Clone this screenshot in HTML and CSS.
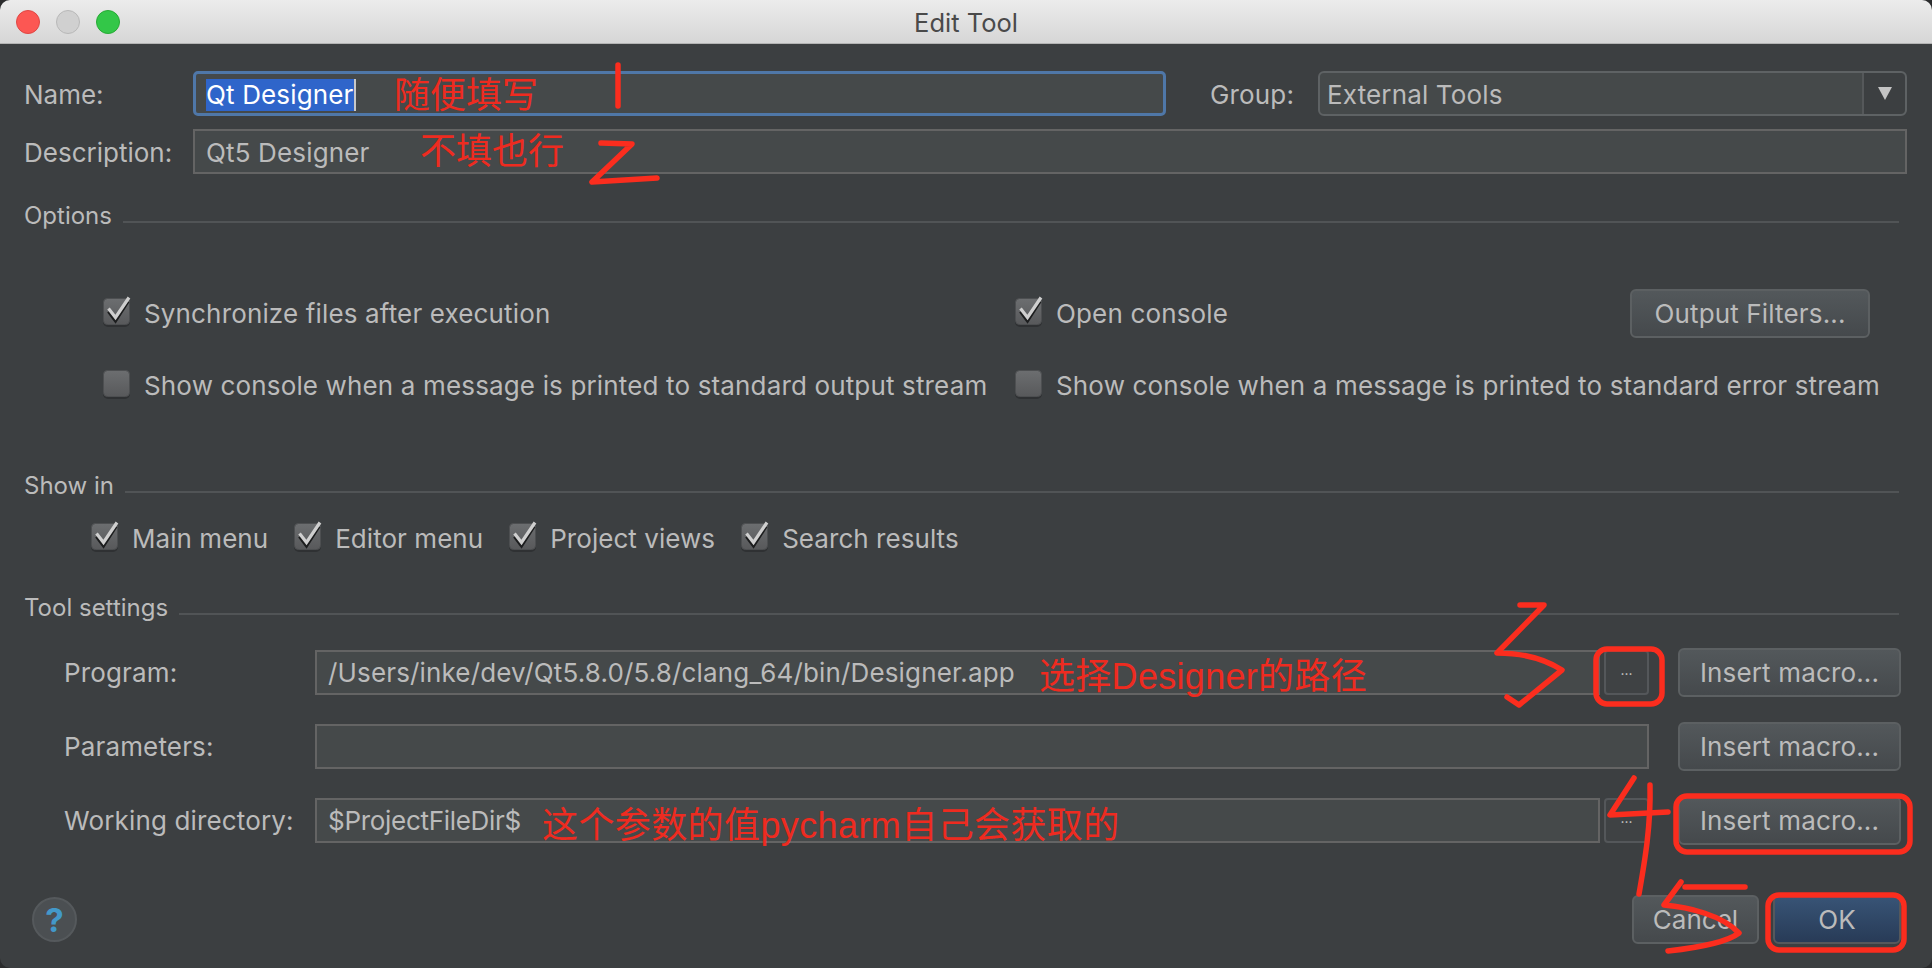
FILE: index.html
```html
<!DOCTYPE html>
<html lang="en">
<head>
<meta charset="utf-8">
<title>Edit Tool</title>
<link rel="stylesheet" href="styles.css">
</head>
<body>
<svg class="defs" width="0" height="0" aria-hidden="true">
  <defs>
    <linearGradient id="boxfill" x1="0" y1="0" x2="0" y2="1">
      <stop offset="0" stop-color="#6c6e70"/>
      <stop offset="1" stop-color="#58595b"/>
    </linearGradient>
    <symbol id="cb-off" viewBox="0 0 30 32">
      <rect x="1" y="5" width="27" height="26" rx="5" fill="#2f3133"/>
      <rect x="1.5" y="2.5" width="26" height="26" rx="4" fill="url(#boxfill)" stroke="#4d4f51"/>
    </symbol>
    <symbol id="cb-on" viewBox="0 0 30 32">
      <rect x="1" y="5" width="27" height="26" rx="5" fill="#2f3133"/>
      <rect x="1.5" y="2.5" width="26" height="26" rx="4" fill="url(#boxfill)" stroke="#4d4f51"/>
      <path d="M6.5 15.5 L13.5 25 L26 5.5" fill="none" stroke="#1c1d1e" stroke-width="3.2"/>
      <path d="M6.5 12.5 L13.5 21.5 L27 1.5" fill="none" stroke="#cfcfcf" stroke-width="3.2"/>
    </symbol>
  </defs>
</svg>
<main class="window">
  <header class="titlebar">
    <div class="lights">
      <span class="light light-red"></span>
      <span class="light light-gray"></span>
      <span class="light light-green"></span>
    </div>
    <div class="title">Edit Tool</div>
    <div></div>
  </header>

  <div class="content">
    <div class="row-name">
      <label class="label label-top">Name:</label>
      <div class="field field-focus"><span class="selected">Qt Designer</span></div>
      <label class="label label-group">Group:</label>
      <div class="combo">
        <span class="combo-value">External Tools</span>
        <span class="combo-arrow"><span class="triangle"></span></span>
      </div>
    </div>
    <div class="row-desc">
      <label class="label label-top">Description:</label>
      <div class="field field-grow field-desc">Qt5 Designer</div>
    </div>

    <section class="group-options">
      <div class="heading"><span>Options</span><i class="rule"></i></div>
      <div class="opt-row opt-row-first">
        <div class="check opt-col"><svg class="box"><use href="#cb-on"/></svg><span>Synchronize files after execution</span></div>
        <div class="check"><svg class="box"><use href="#cb-on"/></svg><span>Open console</span></div>
        <button class="btn btn-filters">Output Filters...</button>
      </div>
      <div class="opt-row opt-row-second">
        <div class="check opt-col"><svg class="box"><use href="#cb-off"/></svg><span>Show console when a message is printed to standard output stream</span></div>
        <div class="check"><svg class="box"><use href="#cb-off"/></svg><span>Show console when a message is printed to standard error stream</span></div>
      </div>
    </section>

    <section class="group-show">
      <div class="heading"><span>Show in</span><i class="rule"></i></div>
      <div class="show-row">
        <div class="check"><svg class="box"><use href="#cb-on"/></svg><span>Main menu</span></div>
        <div class="check"><svg class="box"><use href="#cb-on"/></svg><span>Editor menu</span></div>
        <div class="check"><svg class="box"><use href="#cb-on"/></svg><span>Project views</span></div>
        <div class="check"><svg class="box"><use href="#cb-on"/></svg><span>Search results</span></div>
      </div>
    </section>

    <section class="group-tool">
      <div class="heading"><span>Tool settings</span><i class="rule"></i></div>
      <div class="tool-grid">
        <div class="tool-row">
          <label class="label label-tool">Program:</label>
          <div class="field field-grow">/Users/inke/dev/Qt5.8.0/5.8/clang_64/bin/Designer.app</div>
          <button class="browse">...</button>
          <button class="btn btn-macro">Insert macro...</button>
        </div>
        <div class="tool-row">
          <label class="label label-tool">Parameters:</label>
          <div class="field field-grow"></div>
          <button class="btn btn-macro">Insert macro...</button>
        </div>
        <div class="tool-row">
          <label class="label label-tool">Working directory:</label>
          <div class="field field-grow field-tight">$ProjectFileDir$</div>
          <button class="browse">...</button>
          <button class="btn btn-macro">Insert macro...</button>
        </div>
      </div>
    </section>

    <footer class="footer">
      <div class="help">?</div>
      <div class="footer-actions">
        <button class="btn btn-cancel">Cancel</button>
        <button class="btn btn-ok">OK</button>
      </div>
    </footer>
  </div>

  <div class="notes">
    <span class="note note-a">随便填写</span>
    <span class="note note-b">不填也行</span>
    <span class="note note-c">选择Designer的路径</span>
    <span class="note note-d">这个参数的值pycharm自己会获取的</span>
    <svg class="scribble" viewBox="0 0 1932 968" width="1932" height="968" aria-hidden="true">
      <path d="M618 65 L618 106"/>
      <path d="M601 143 L632 144 L592 182 L657 178"/>
      <path d="M1520 605 L1544 605 L1497 653 C1519 653 1543 658 1562 670 L1519 705 L1507 697"/>
      <rect x="1596" y="649" width="66" height="55" rx="11"/>
      <path d="M1634 778 L1610 815 L1668 812"/>
      <path d="M1650 785 C1651 825 1645 860 1639 894"/>
      <rect x="1676" y="796" width="234" height="56" rx="11"/>
      <path d="M1681 882 L1664 905 C1688 907 1722 915 1739 933 C1726 943 1695 948 1668 951"/>
      <path d="M1685 887 L1745 887"/>
      <rect x="1768" y="895" width="136" height="55" rx="11"/>
    </svg>
  </div>
</main>
</body>
</html>
```

FILE: styles.css
```css
* { box-sizing: border-box; }

html, body {
  margin: 0;
  height: 100%;
  background: #2b2c2d;
  overflow: hidden;
}

.defs { position: absolute; }

.window {
  position: relative;
  width: 1932px;
  height: 968px;
  background: #3c3f41;
  border-radius: 10px;
  overflow: hidden;
  color: #bbbbbb;
  font-family: Inter, "Noto Sans", sans-serif;
  font-size: 26px;
  letter-spacing: 0.15px;
}

.titlebar {
  height: 44px;
  display: grid;
  grid-template-columns: 1fr auto 1fr;
  align-items: center;
  background: linear-gradient(#ececec, #d6d6d6);
  border-bottom: 1px solid #b4b4b4;
}

.title { color: #4a4a4a; font-size: 25.5px; padding-top: 2px; letter-spacing: 0; }

.lights { display: flex; gap: 16px; padding-left: 16px; }
.light { width: 24px; height: 24px; border-radius: 50%; border: 1px solid transparent; }
.light-red { background: #fc5753; border-color: #df4744; }
.light-gray { background: #d0d0d0; border-color: #b8b8b8; }
.light-green { background: #33c748; border-color: #27aa35; }

.content { padding: 0 25px 0 24px; }

.row-name { display: flex; align-items: center; margin-top: 27px; height: 45px; }
.row-desc { display: flex; align-items: center; margin-top: 13px; height: 45px; }

.label-top { width: 169px; flex: none; padding-top: 2px; letter-spacing: 0; }
.label-group { width: 108px; flex: none; margin-left: 44px; padding-top: 2px; }
.label-tool { width: 251px; flex: none; }

.field {
  height: 45px;
  display: flex;
  align-items: center;
  padding-left: 11px;
  background: #45494a;
  border: 2px solid #646464;
  white-space: nowrap;
}
.field-grow { flex: 1; min-width: 0; }
.field-desc { padding-top: 2px; }
.field-tight { letter-spacing: -0.3px; }
.field-focus {
  width: 973px;
  flex: none;
  border: 3px solid #4f77a8;
  border-radius: 5px;
  padding-left: 10px;
  padding-top: 2px;
}
.selected {
  height: 32px;
  line-height: 32px;
  background: #2f65ca;
  color: #ffffff;
  border-right: 2px solid #c8c8c8;
}

.combo {
  flex: 1;
  height: 45px;
  display: flex;
  align-items: center;
  background: #45494a;
  border: 2px solid #5e6264;
  border-radius: 6px;
}
.combo-value { flex: 1; padding: 2px 0 0 7px; }
.combo-arrow {
  width: 43px;
  height: 100%;
  display: flex;
  align-items: center;
  justify-content: center;
  background: #3c3f41;
  border-left: 2px solid #55585a;
  border-radius: 0 5px 5px 0;
}
.triangle {
  width: 0;
  height: 0;
  border-left: 7px solid transparent;
  border-right: 7px solid transparent;
  border-top: 13px solid #c4c4c4;
}

.heading {
  height: 24px;
  display: flex;
  align-items: center;
  gap: 11px;
  padding-right: 8px;
  line-height: 24px;
  font-size: 24px;
  letter-spacing: 0;
}
.rule { flex: 1; height: 2px; margin-top: 12px; background: #515456; }

.group-options { margin-top: 30px; }
.group-show { margin-top: 64px; }
.group-tool { margin-top: 45px; }

.check { display: flex; align-items: center; gap: 12px; white-space: nowrap; }
.box { width: 30px; height: 32px; flex: none; margin-top: -2px; }

.opt-row { display: flex; align-items: center; height: 50px; padding-left: 78px; }
.opt-row-first { margin-top: 60px; }
.opt-row-second { margin-top: 22px; }
.opt-col { width: 912px; flex: none; }

.show-row {
  display: flex;
  align-items: center;
  gap: 25px;
  height: 26px;
  margin-top: 27px;
  padding-left: 66px;
  letter-spacing: 0.05px;
}

.btn {
  height: 49px;
  padding: 0;
  font: inherit;
  letter-spacing: inherit;
  color: #bbbbbb;
  background: linear-gradient(#53585b, #45494c);
  border: 2px solid #5c6062;
  border-radius: 6px;
}
.btn-filters { width: 240px; margin-left: auto; margin-right: 37px; }
.btn-macro { width: 223px; flex: none; margin-left: 29px; }
.btn-cancel { width: 127px; letter-spacing: 0; }
.btn-ok {
  width: 128px;
  background: linear-gradient(#385476, #283b57);
  border-color: #55585c;
}

.tool-grid { display: grid; gap: 25px; margin-top: 28px; padding: 0 6px 0 40px; }
.tool-row { display: flex; align-items: center; height: 49px; }

.browse {
  width: 45px;
  height: 45px;
  flex: none;
  margin-left: 4px;
  padding: 0 0 6px;
  font: inherit;
  font-size: 14px;
  color: #c8c8c8;
  background: #3f4244;
  border: 2px solid #54575a;
  border-radius: 4px;
}

.footer {
  display: flex;
  align-items: center;
  justify-content: space-between;
  height: 49px;
  margin-top: 50px;
  padding: 0 6px 0 8px;
}
.footer-actions { display: flex; gap: 14px; }
.help {
  width: 45px;
  height: 45px;
  display: flex;
  align-items: center;
  justify-content: center;
  border-radius: 50%;
  background: #4b4f52;
  border: 2px solid #55595c;
  color: #4398c9;
  font-size: 33px;
  font-weight: 700;
}

.notes { position: absolute; inset: 0; pointer-events: none; }
.note {
  position: absolute;
  color: #ee2b20;
  font-family: "Liberation Sans", "Noto Sans CJK SC", sans-serif;
  font-size: 36px;
  line-height: 40px;
  white-space: nowrap;
  letter-spacing: 0;
}
.note-a { left: 394px; top: 76px; }
.note-b { left: 420px; top: 132px; }
.note-c { left: 1039px; top: 657px; letter-spacing: 0.3px; }
.note-d { left: 542px; top: 806px; letter-spacing: 0.4px; }

.scribble { position: absolute; left: 0; top: 0; }
.scribble path, .scribble rect {
  fill: none;
  stroke: #fb2d1e;
  stroke-width: 5.5;
  stroke-linecap: round;
  stroke-linejoin: round;
}
```
